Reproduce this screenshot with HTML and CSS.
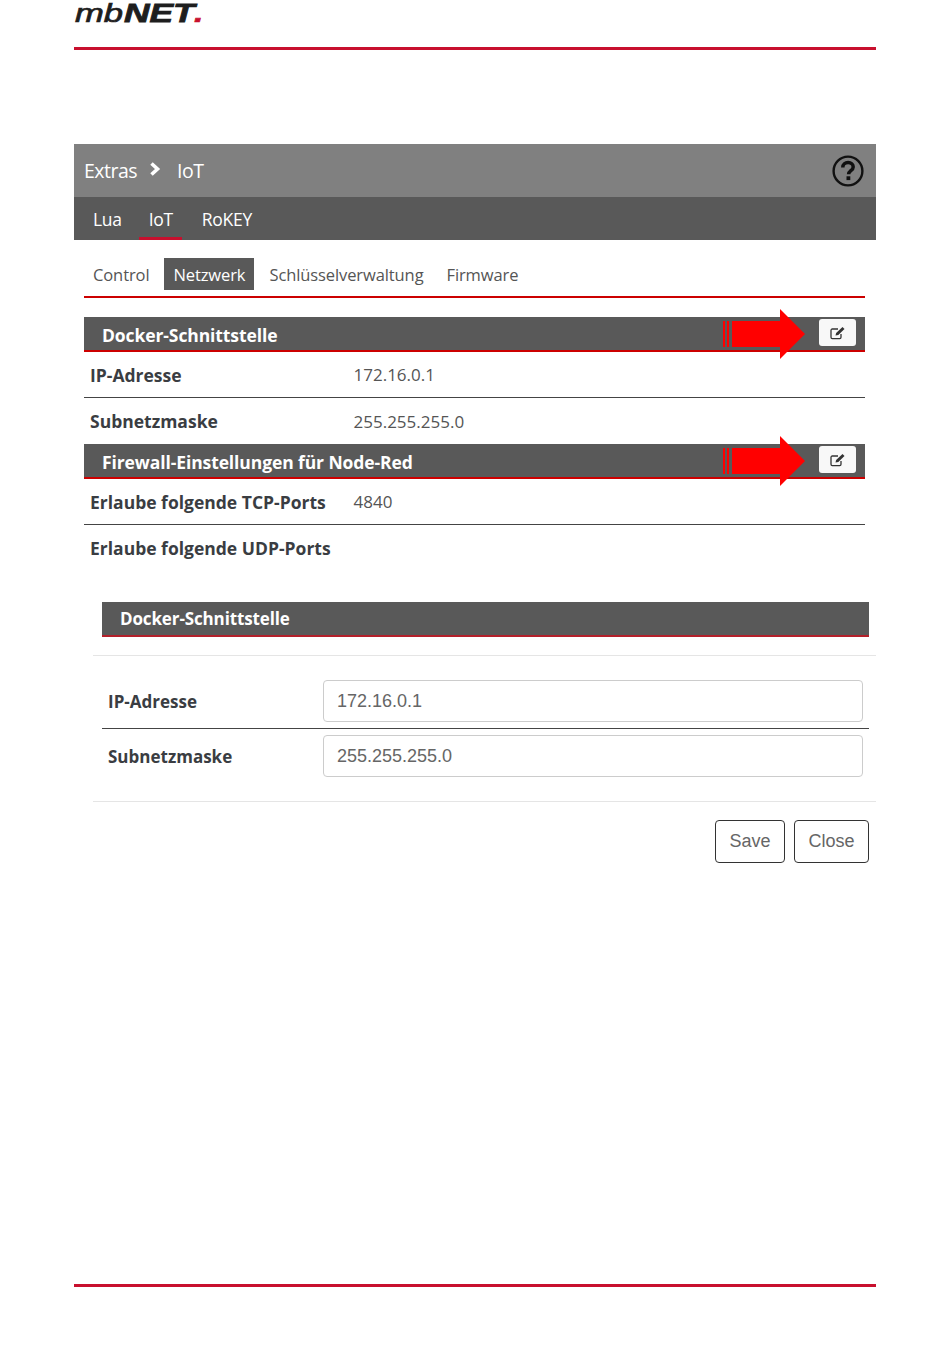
FILE: index.html
```html
<!DOCTYPE html>
<html lang="de">
<head>
<meta charset="utf-8">
<title>mbNET IoT</title>
<link rel="stylesheet" href="styles.css">
</head>
<body>
<div class="page">
  <header class="logo-head">
    <div class="logo"><span class="logo-mb">mb</span><span class="logo-net">NET</span><span class="logo-dot">.</span></div>
  </header>

  <section class="app">
    <div class="crumb">
      <span>Extras</span>
      <svg class="chev" viewBox="0 0 12 14" width="12" height="14"><path d="M2.500 1.500l6 5.500-6 5.500" fill="none" stroke="#fff" stroke-width="3.600"/></svg>
      <span>IoT</span>
      <svg class="help" viewBox="0 0 32 32" width="32" height="32"><circle cx="16" cy="16" r="14.400" fill="none" stroke="#111" stroke-width="2.400"/><path d="M10.800 12.400c0-3 2.400-4.800 5.300-4.800 3 0 5.100 1.800 5.100 4.300 0 3.700-4.600 3.900-4.600 7.400" fill="none" stroke="#111" stroke-width="3.500"/><rect x="14.500" y="21.300" width="3.800" height="3.800" fill="#111"/></svg>
    </div>
    <nav class="mainnav">
      <a>Lua</a>
      <a class="active">IoT</a>
      <a>RoKEY</a>
    </nav>

    <div class="content">
      <div class="tabs">
        <a>Control</a>
        <a class="active">Netzwerk</a>
        <a>Schlüsselverwaltung</a>
        <a>Firmware</a>
      </div>

      <div class="bar first">
        <h2>Docker-Schnittstelle</h2>
        <svg class="arrow" viewBox="0 0 82 50" width="82" height="50"><path d="M0 12h2v26H0zM4 12h2v26H4zM9 12h48V0l25 25-25 25V38H9z" fill="#f00"/></svg>
        <button class="edit"><svg viewBox="0 0 16 14" width="16" height="14"><path d="M11 8v3.300a1.300 1.300 0 0 1-1.300 1.300H2.300A1.300 1.300 0 0 1 1 11.300V4.300A1.300 1.300 0 0 1 2.300 3H8" fill="none" stroke="#333" stroke-width="1.300"/><path d="M5.500 9.500l.6-2.500L12.500 1l2 2-6.200 6z" fill="#333"/></svg></button>
      </div>
      <div class="row ruled"><b>IP-Adresse</b><span>172.16.0.1</span></div>
      <div class="row"><b>Subnetzmaske</b><span>255.255.255.0</span></div>

      <div class="bar">
        <h2>Firewall-Einstellungen für Node-Red</h2>
        <svg class="arrow" viewBox="0 0 82 50" width="82" height="50"><path d="M0 12h2v26H0zM4 12h2v26H4zM9 12h48V0l25 25-25 25V38H9z" fill="#f00"/></svg>
        <button class="edit"><svg viewBox="0 0 16 14" width="16" height="14"><path d="M11 8v3.300a1.300 1.300 0 0 1-1.300 1.300H2.300A1.300 1.300 0 0 1 1 11.300V4.300A1.300 1.300 0 0 1 2.300 3H8" fill="none" stroke="#333" stroke-width="1.300"/><path d="M5.500 9.500l.6-2.500L12.500 1l2 2-6.200 6z" fill="#333"/></svg></button>
      </div>
      <div class="row ruled"><b>Erlaube folgende TCP-Ports</b><span>4840</span></div>
      <div class="row"><b>Erlaube folgende UDP-Ports</b><span></span></div>
    </div>

    <div class="modal">
      <div class="modal-bar"><h2>Docker-Schnittstelle</h2></div>
      <div class="modal-body">
        <div class="field ruled"><b>IP-Adresse</b><input type="text" value="172.16.0.1"></div>
        <div class="field"><b>Subnetzmaske</b><input type="text" value="255.255.255.0"></div>
      </div>
      <div class="modal-foot">
        <button class="btn">Save</button>
        <button class="btn">Close</button>
      </div>
    </div>
  </section>

  <footer class="foot-line"></footer>
</div>
</body>
</html>
```

FILE: styles.css
```css
* { box-sizing: border-box; }
html, body { margin: 0; padding: 0; background: #fff; }
body { font-family: "Open Sans", sans-serif; color: #333; height: 1360px; overflow: hidden; }
.page { width: 950px; padding: 0 74px; }

.logo-head { height: 50px; padding-top: 1px; border-bottom: 3px solid #c8102e; }
.logo { height: 24px; line-height: 24px; font-family: "Liberation Sans", sans-serif; font-style: italic; color: #1e1e1e; white-space: nowrap; padding-left: 1px; display: flex; }
.logo-mb { font-size: 26px; font-weight: 400; width: 49px; flex: none; transform: scaleX(1.33); transform-origin: left; -webkit-text-stroke: .7px #1e1e1e; }
.logo-net { font-size: 26px; font-weight: 700; width: 70px; flex: none; transform: scaleX(1.36); transform-origin: left; -webkit-text-stroke: .8px #1e1e1e; }
.logo-dot { color: #c8102e; font-size: 26px; font-weight: 700; width: 8px; flex: none; transform: scaleX(1.3); transform-origin: left; -webkit-text-stroke: .6px #c8102e; }

.app { margin-top: 94px; }
.crumb { height: 53px; background: #808080; color: #fff; display: flex; align-items: center; padding: 0 12px 0 10px; font-size: 19.500px; letter-spacing: -.5px; }
.chev { margin: -3px 16px 0 12px; }
.help { margin-left: auto; }
.mainnav { height: 43px; background: #595959; display: flex; padding-left: 9px; }
.mainnav a { color: #fff; font-size: 17.500px; line-height: 45px; padding: 0 9px 0 10px; margin-right: 8px; letter-spacing: -.3px; height: 43px; }
.mainnav a.active { border-bottom: 3px solid #c8102e; margin-right: 10px; }

.content { padding: 18px 11px 0 10px; }
.tabs { height: 40px; display: flex; border-bottom: 2px solid #c00; }
.tabs a { height: 32px; line-height: 33px; font-size: 16.500px; padding: 0 9px; margin-right: 6px; color: #555; letter-spacing: -.1px; }
.tabs a:nth-child(3) { margin-right: 5px; }
.tabs a.active { background: #595959; color: #fff; }

.bar { height: 35px; background: #595959; border-bottom: 2px solid #c00; display: flex; align-items: center; padding-left: 18px; position: relative; }
.bar.first { margin-top: 19px; }
.bar h2 { margin: 0; padding-top: 2px; color: #fff; font-size: 17.500px; font-weight: 700; letter-spacing: -.1px; }
.modal-bar h2 { margin: 0; color: #fff; font-size: 17px; font-weight: 700; letter-spacing: -.13px; }
.arrow { position: absolute; left: 639px; top: -8px; }
.edit { position: absolute; left: 735px; top: 2px; width: 37px; height: 27px; border: 0; border-radius: 3px; background: #f8f8f8; padding: 0; display: flex; align-items: center; justify-content: center; }

.row { height: 46px; display: flex; align-items: center; padding-left: 6px; font-size: 17px; color: #555; }
.row.ruled { border-bottom: 1px solid #444; }
.row b { width: 263.500px; color: #3a3d42; font-size: 17.500px; flex: none; }

.modal { margin-top: 31px; padding: 0 7px 0 19px; }
.modal-bar { height: 35px; margin-left: 9px; background: #595959; border-bottom: 2px solid #b3202a; display: flex; align-items: center; padding-left: 18px; }
.modal-body { margin-top: 18px; border-top: 1px solid #e5e5e5; border-bottom: 1px solid #e5e5e5; height: 147px; padding-top: 24px; margin-right: -7px; }
.field { display: flex; align-items: center; margin: 0 7px 0 9px; height: 48px; padding: 0 6px; font-size: 17px; color: #3a3d42; }
.field.ruled { height: 49px; border-bottom: 1px solid #444; padding-bottom: 6px; margin-bottom: 3px; }
.field b { width: 215px; flex: none; }
.field input { flex: 1; min-width: 0; height: 42px; border: 1px solid #ccc; border-radius: 4px; padding: 0 13px; font: 18px "Liberation Sans", sans-serif; color: #666; outline: none; background: #fff; }

.modal-foot { display: flex; justify-content: flex-end; gap: 9px; padding-top: 18px; }
.btn { height: 43px; background: #fff; border: 1px solid #333; border-radius: 4px; font: 18px "Liberation Sans", sans-serif; color: #666; padding: 0 13.500px; }

.foot-line { margin-top: 421px; height: 3px; background: #c8102e; }
```
